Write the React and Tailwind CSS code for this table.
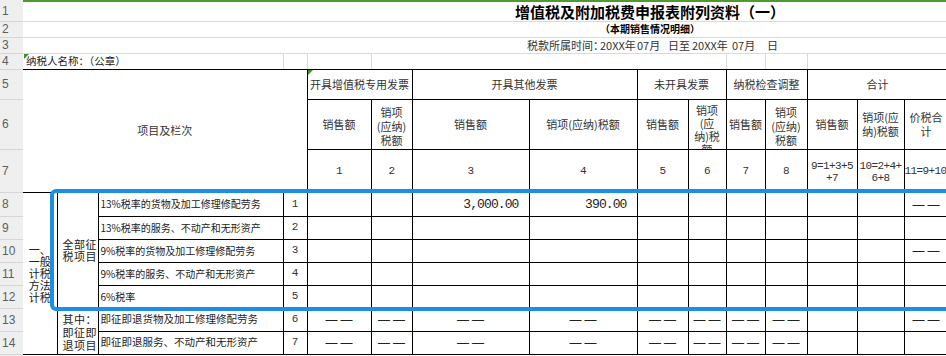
import React from 'react';

const cols = ['w-[23px]', 'w-[34px]', 'w-[41px]', 'w-[185px]', 'w-[24px]', 'w-[64px]', 'w-[41px]', 'w-[117px]', 'w-[108px]', 'w-[51px]', 'w-[38px]', 'w-[39px]', 'w-[42px]', 'w-[50px]', 'w-[47px]', 'w-[44px]'];

const head = "bg-[#efefef] text-[#5e5e5e] font-['Liberation_Sans',sans-serif] text-[12px] leading-none text-left pl-[2px] border-b border-[#d6d6d6]";
const grid = 'border-b border-[#dadada]';
const cell = 'border border-black';
const mono = "font-['Liberation_Mono',monospace]";

function Dash() {
  return <span className="tracking-[3px] mr-[-3px] text-[12px] leading-none font-['Liberation_Sans',sans-serif]">——</span>;
}

const body = [
  { no: '8', h: 'h-[24px]', label: '13%税率的货物及加工修理修配劳务', line: '1', vals: { 3: '3,000.00', 4: '390.00', 11: '-' } },
  { no: '9', h: 'h-[23px]', label: '13%税率的服务、不动产和无形资产', line: '2', vals: {} },
  { no: '10', h: 'h-[23px]', label: '9%税率的货物及加工修理修配劳务', line: '3', vals: { 11: '-' } },
  { no: '11', h: 'h-[23px]', label: '9%税率的服务、不动产和无形资产', line: '4', vals: {} },
  { no: '12', h: 'h-[23px]', label: '6%税率', line: '5', vals: {} },
  { no: '13', h: 'h-[23px]', label: '即征即退货物及加工修理修配劳务', line: '6', vals: { 1: '-', 2: '-', 3: '-', 4: '-', 5: '-', 6: '-', 7: '-', 8: '-', 11: '-' } },
  { no: '14', h: 'h-[23px]', label: '即征即退服务、不动产和无形资产', line: '7', vals: { 1: '-', 2: '-', 3: '-', 4: '-', 5: '-', 6: '-', 7: '-', 8: '-' } },
];

function DataCell({ v }) {
  if (v === '-') {
    return <td className={cell + ' text-center'}><Dash /></td>;
  }
  if (v) {
    return <td className={cell + ' text-right pr-[10px] text-[13px] leading-none tracking-[-0.9px] ' + mono}>{v}</td>;
  }
  return <td className={cell}></td>;
}

export default function App() {
  return (
    <div className="relative w-[946px] h-[356px] overflow-hidden bg-white text-[11px] leading-[13px] text-[#222] font-['Noto_Sans_CJK_SC',sans-serif]">
      <div className="flex h-[2px]">
        <div className="w-[23px] bg-[#efefef]"></div>
        <div className="flex-1 bg-[#4f9a2d]"></div>
      </div>
      <table className="table-fixed border-collapse w-[948px]">
        <colgroup>
          {cols.map((c, i) => <col key={i} className={c} />)}
        </colgroup>
        <tbody>
          <tr className="h-[19px]">
            <td className={head}>1</td>
            <td colSpan={15} className={grid + ' align-bottom pl-[492px] whitespace-nowrap text-[15px] font-bold leading-[18px] text-black'}>增值税及附加税费申报表附列资料（一）</td>
          </tr>
          <tr className="h-[16px]">
            <td className={head}>2</td>
            <td colSpan={15} className={grid + ' pl-[577px] whitespace-nowrap text-[10px] font-bold leading-none text-black'}>（本期销售情况明细）</td>
          </tr>
          <tr className="h-[16px]">
            <td className={head}>3</td>
            <td colSpan={15} className={grid + ' pl-[504px] text-[11px] leading-none text-[#333]'}>
              <div className="flex whitespace-nowrap">
                <span className="w-[73px]">税款所属时间：</span>
                <span className="w-[37px]">20XX年</span>
                <span className="w-[31px]">07月</span>
                <span className="w-[24px]">日至</span>
                <span className="w-[40px]">20XX年</span>
                <span className="w-[35px]">07月</span>
                <span>日</span>
              </div>
            </td>
          </tr>
          <tr className="h-[16px]">
            <td className={head}>4</td>
            <td colSpan={3} className="border-r border-[#dadada] border-b border-b-black pl-[3px] text-[10.5px] leading-none whitespace-nowrap">纳税人名称：（公章）</td>
            <td className="border-r border-[#dadada] border-b border-b-black"></td>
            <td className="border-r border-[#dadada] border-b border-b-black"></td>
            <td colSpan={5} className="border-r border-[#dadada] border-b border-b-black"></td>
            <td className="border-r border-[#dadada] border-b border-b-black"></td>
            <td className="border-r border-[#dadada] border-b border-b-black"></td>
            <td colSpan={3} className="border-b border-b-black"></td>
          </tr>

          <tr className="h-[30px] text-[11px] text-center leading-[13px] text-[#333]">
            <td className={head}>5</td>
            <td colSpan={4} rowSpan={3} className="border-y border-r border-black">项目及栏次</td>
            <td colSpan={2} className={cell + ' whitespace-nowrap'}>开具增值税专用发票</td>
            <td colSpan={2} className={cell}>开具其他发票</td>
            <td colSpan={2} className={cell}>未开具发票</td>
            <td colSpan={2} className={cell + ' whitespace-nowrap'}>纳税检查调整</td>
            <td colSpan={3} className={cell}>合计</td>
          </tr>
          <tr className="h-[50px] text-[11px] text-center leading-[14px] text-[#333]">
            <td className={head}>6</td>
            <td className={cell}>销售额</td>
            <td className={cell + ' pt-[4px]'}>销项<br />(应纳)<br />税额</td>
            <td className={cell}>销售额</td>
            <td className={cell + ' whitespace-nowrap'}>销项(应纳)税额</td>
            <td className={cell}>销售额</td>
            <td className={cell + ' align-top'}>
              <div className="h-[49px] overflow-hidden pt-[4px] leading-[13px]">销项<br />(应<br />纳)税<br />额</div>
            </td>
            <td className={cell + ' whitespace-nowrap'}>销售额</td>
            <td className={cell + ' pt-[4px]'}>销项<br />(应纳)<br />税额</td>
            <td className={cell}>销售额</td>
            <td className={cell + ' whitespace-nowrap'}>销项(应<br />纳)税额</td>
            <td className={cell + ' whitespace-nowrap'}>价税合<br />计</td>
          </tr>
          <tr className={'h-[43px] text-center text-[11px] tracking-[-0.6px] leading-[12px] text-[#333] ' + mono}>
            <td className={head + ' tracking-normal'}>7</td>
            <td className={cell}>1</td>
            <td className={cell}>2</td>
            <td className={cell}>3</td>
            <td className={cell}>4</td>
            <td className={cell}>5</td>
            <td className={cell}>6</td>
            <td className={cell}>7</td>
            <td className={cell}>8</td>
            <td className={cell + ' whitespace-nowrap pt-[3px]'}>9=1+3+5<br />+7</td>
            <td className={cell + ' whitespace-nowrap pt-[3px]'}>10=2+4+<br />6+8</td>
            <td className={cell + ' whitespace-nowrap text-left'}>11=9+10</td>
          </tr>

          {body.map((r, i) => (
            <tr key={r.no} className={r.h + ' text-[#222]'}>
              <td className={head}>{r.no}</td>
              {i === 0 && (
                <td rowSpan={7} className="border-y border-r border-black text-center text-[11px] leading-[12px]">一、<br />一般<br />计税<br />方法<br />计税</td>
              )}
              {i === 0 && (
                <td rowSpan={5} className={cell + ' text-left pl-[5px] text-[11px] leading-[12px] tracking-[0.5px]'}>全部征<br />税项目</td>
              )}
              {i === 5 && (
                <td rowSpan={2} className={cell + ' text-left pl-[5px] pt-[2px] text-[11px] leading-[13px] tracking-[0.5px]'}>其中：<br />即征即<br />退项目</td>
              )}
              <td className={cell + (i > 4 ? ' text-[10.5px]' : ' text-[10px]') + ' pl-[2px] leading-none whitespace-nowrap'}>{r.label}</td>
              <td className={cell + ' text-center text-[11px] leading-none text-[#333] ' + mono}>{r.line}</td>
              {[1, 2, 3, 4, 5, 6, 7, 8, 9, 10, 11].map((c) => (
                <DataCell key={c} v={r.vals[c]} />
              ))}
            </tr>
          ))}
          <tr className="h-[20px]">
            <td className={head}>15</td>
            <td colSpan={15} className="border-t border-black"></td>
          </tr>
        </tbody>
      </table>

      <svg className="absolute left-[24px] top-[54px]" width="5" height="5" viewBox="0 0 5 5">
        <path d="M0 0H5L0 5Z" fill="#3f8f2c" />
      </svg>
      <svg className="absolute left-[308px] top-[70px]" width="5" height="5" viewBox="0 0 5 5">
        <path d="M0 0H5L0 5Z" fill="#3f8f2c" />
      </svg>

      <div className="absolute left-[50px] top-[189px] w-[910px] h-[122px] border-4 border-[#1b8fe6] rounded-[6px]"></div>
    </div>
  );
}
